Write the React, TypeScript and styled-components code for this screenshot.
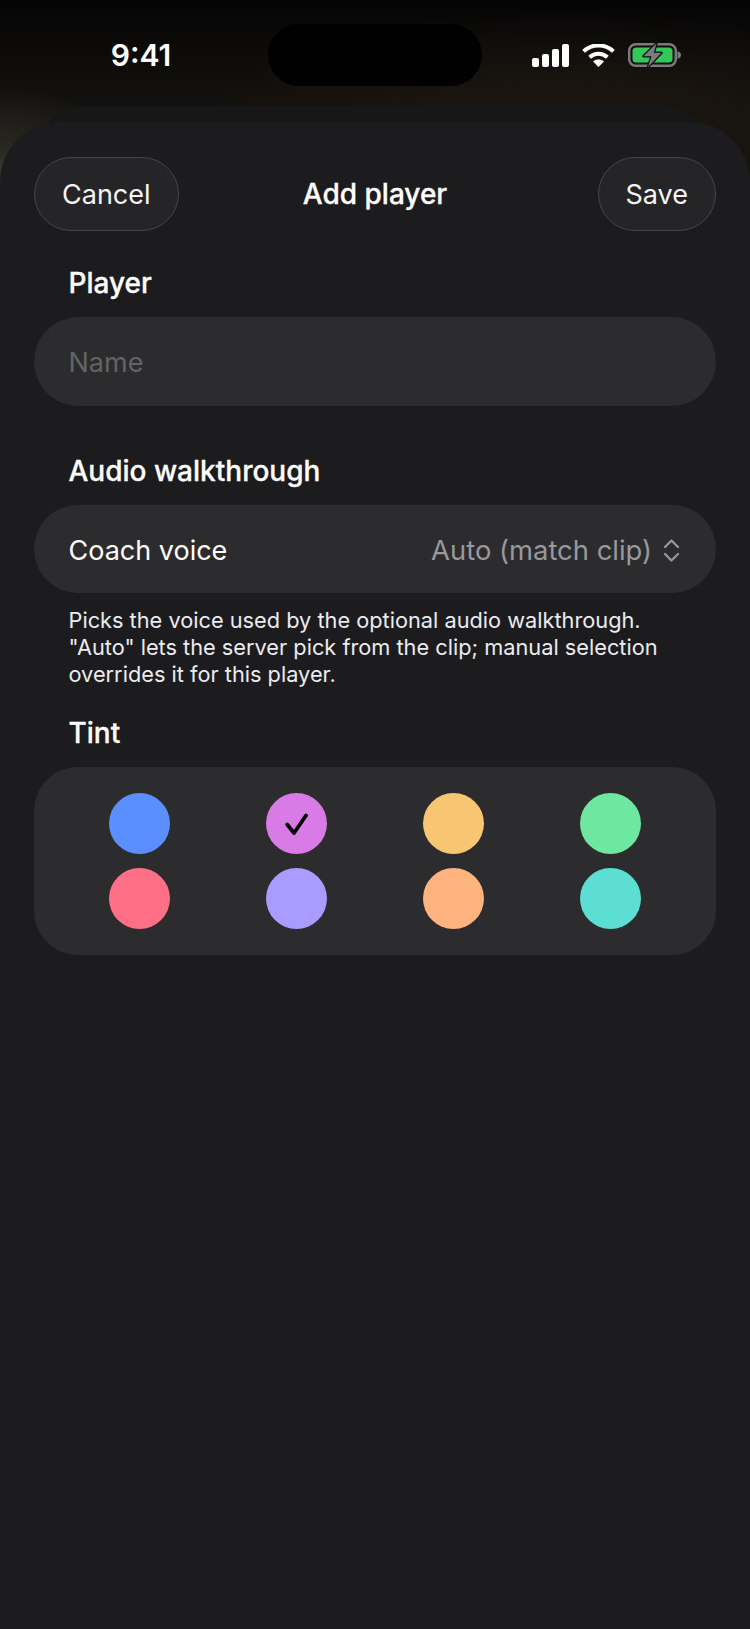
import React from 'react';
import styled, { createGlobalStyle } from 'styled-components';

const GlobalStyle = createGlobalStyle`
  html, body {
    margin: 0;
    padding: 0;
    background: #1c1c1e;
  }
  * {
    box-sizing: border-box;
  }
`;

const TINTS = ['#5b8eff', '#d97be6', '#f8c672', '#6ee7a0', '#ff7087', '#a99bff', '#ffb37e', '#5cdfd2'];
const SELECTED_TINT = 1;

const Screen = styled.div`
  width: 750px;
  height: 1629px;
  overflow: hidden;
  display: flex;
  flex-direction: column;
  font-family: Inter, 'Liberation Sans', sans-serif;
  color: #fff;
  background:
    radial-gradient(ellipse 150px 120px at 0 205px, #55564b 0%, rgba(60, 60, 52, 0.55) 45%, rgba(20, 20, 18, 0) 100%),
    radial-gradient(ellipse 360px 110px at 560px 120px, #1c1610 0%, rgba(30, 22, 14, 0) 100%),
    linear-gradient(180deg, #050505 0, #14120f 110px);
`;

const StatusBar = styled.div`
  height: 106px;
  flex: none;
  padding-top: 24px;
  display: flex;
  align-items: flex-start;
`;

const Time = styled.div`
  width: 268px;
  height: 62px;
  padding-left: 14px;
  display: flex;
  align-items: center;
  justify-content: center;
  font-size: 30px;
  font-weight: 600;
`;

const Island = styled.div`
  width: 214px;
  height: 62px;
  border-radius: 31px;
  background: #000;
`;

const StatusIcons = styled.div`
  margin-left: 50px;
  height: 62px;
  display: flex;
  align-items: center;
  gap: 13px;
`;

const BackSheet = styled.div`
  flex: none;
  height: 70px;
  margin: 0 30px -54px;
  border-radius: 60px 60px 0 0;
  background: #171718;
`;

const Sheet = styled.div`
  flex: 1;
  position: relative;
  padding: 35px 34px 0;
  border-radius: 60px 60px 0 0;
  background: #1c1c1e;
`;

const Header = styled.header`
  display: grid;
  grid-template-columns: 1fr auto 1fr;
  align-items: center;
  margin-bottom: 36px;
`;

const PillButton = styled.button<{ $end?: boolean }>`
  justify-self: ${(p) => (p.$end ? 'end' : 'start')};
  height: 74px;
  padding: 0 27px;
  border-radius: 37px;
  border: 1.5px solid #454547;
  background: #252527;
  color: #f5f5f5;
  font-family: inherit;
  font-size: 27px;
  font-weight: 400;
`;

const Title = styled.h1`
  margin: 0;
  font-size: 28px;
  font-weight: 500;
  -webkit-text-stroke: 0.3px #fff;
`;

const SectionLabel = styled.h2`
  margin: 0 0 17px 34.5px;
  font-size: 28px;
  line-height: 33px;
  font-weight: 500;
  -webkit-text-stroke: 0.3px #fff;
`;

const NameInput = styled.input`
  display: block;
  width: 100%;
  height: 89px;
  margin-bottom: 49px;
  padding: 2px 34.5px 0;
  border: none;
  outline: none;
  border-radius: 44.5px;
  background: #2c2c2e;
  color: #fff;
  font-family: inherit;
  font-size: 27px;

  &::placeholder {
    color: #636366;
    opacity: 1;
  }
`;

const PickerRow = styled.div`
  height: 88px;
  padding: 2px 36px 0 34.5px;
  display: flex;
  align-items: center;
  justify-content: space-between;
  border-radius: 44px;
  background: #2c2c2e;
  font-size: 27px;
`;

const PickerValue = styled.div`
  display: flex;
  align-items: center;
  gap: 11px;
  font-size: 27.4px;
  color: #98989d;
`;

const Caption = styled.p`
  margin: 14px 0 29px 34.5px;
  font-size: 21.76px;
  line-height: 27px;
  color: #ebebf0;
`;

const TintPanel = styled.div`
  padding: 26px 27.5px;
  display: grid;
  grid-template-columns: repeat(4, 1fr);
  row-gap: 14px;
  border-radius: 44px;
  background: #2c2c2e;
`;

const Swatch = styled.div<{ $color: string }>`
  width: 61px;
  height: 61px;
  justify-self: center;
  display: flex;
  align-items: center;
  justify-content: center;
  border-radius: 50%;
  background: ${(p) => p.$color};
`;

const SignalIcon = () => (
  <svg width="37" height="23" viewBox="0 0 37 23" fill="#fff">
    <rect x="0" y="14" width="7" height="9" rx="2" />
    <rect x="10" y="10" width="7" height="13" rx="2" />
    <rect x="20" y="5" width="7" height="18" rx="2" />
    <rect x="30" y="0" width="7" height="23" rx="2" />
  </svg>
);

const WifiIcon = () => (
  <svg width="33" height="23" viewBox="0 0 33 23" fill="none" stroke="#fff" strokeWidth="4">
    <path d="M1.6 7.4C10 -0.6 23 -0.6 31.4 7.4" />
    <path d="M7.6 13.2C12.8 8.6 20.2 8.6 25.4 13.2" />
    <path d="M16.5 23L11 17.4C14.2 14.8 18.8 14.8 22 17.4Z" fill="#fff" stroke="none" />
  </svg>
);

const BatteryIcon = () => (
  <svg width="53" height="26" viewBox="0 0 53 26" fill="none">
    <rect x="1.2" y="2.2" width="46.6" height="21.6" rx="6.5" stroke="#7b7b7e" strokeWidth="2.4" />
    <path d="M49.5 9.2v7.6c2.2-.5 3.5-2 3.5-3.8S51.7 9.7 49.5 9.2Z" fill="#7b7b7e" />
    <rect x="4.5" y="5.5" width="40" height="15" rx="3.5" fill="#34c759" />
    <path
      d="M28.5 1.3 15.5 14.2H23.5L20 25 33.5 10.8H25.8Z"
      fill="#7b7b7e"
      stroke="#0d0d0d"
      strokeWidth="2.4"
      strokeLinejoin="round"
      paintOrder="stroke"
    />
  </svg>
);

const UpDownIcon = () => (
  <svg width="17" height="23" viewBox="0 0 17 23" fill="none" stroke="#98989d" strokeWidth="2.2" strokeLinecap="round" strokeLinejoin="round">
    <path d="M2 8 8.5 1.5 15 8" />
    <path d="M2 15 8.5 21.5 15 15" />
  </svg>
);

const CheckIcon = () => (
  <svg width="24" height="24" viewBox="0 0 24 24" fill="none" stroke="#000" strokeWidth="3.8" strokeLinecap="round" strokeLinejoin="round">
    <path d="M2.2 12.5 9 21 21 3.5" />
  </svg>
);

const App: React.FC = () => {
  return (
    <Screen>
      <GlobalStyle />
      <StatusBar>
        <Time>9:41</Time>
        <Island />
        <StatusIcons>
          <SignalIcon />
          <WifiIcon />
          <BatteryIcon />
        </StatusIcons>
      </StatusBar>
      <BackSheet />
      <Sheet>
        <Header>
          <PillButton>Cancel</PillButton>
          <Title>Add player</Title>
          <PillButton $end>Save</PillButton>
        </Header>

        <SectionLabel>Player</SectionLabel>
        <NameInput placeholder="Name" />

        <SectionLabel>Audio walkthrough</SectionLabel>
        <PickerRow>
          <span>Coach voice</span>
          <PickerValue>
            Auto (match clip)
            <UpDownIcon />
          </PickerValue>
        </PickerRow>
        <Caption>
          Picks the voice used by the optional audio walkthrough.
          <br />
          "Auto" lets the server pick from the clip; manual selection
          <br />
          overrides it for this player.
        </Caption>

        <SectionLabel>Tint</SectionLabel>
        <TintPanel>
          {TINTS.map((color, i) => (
            <Swatch key={color} $color={color}>
              {i === SELECTED_TINT && <CheckIcon />}
            </Swatch>
          ))}
        </TintPanel>
      </Sheet>
    </Screen>
  );
};

export default App;
